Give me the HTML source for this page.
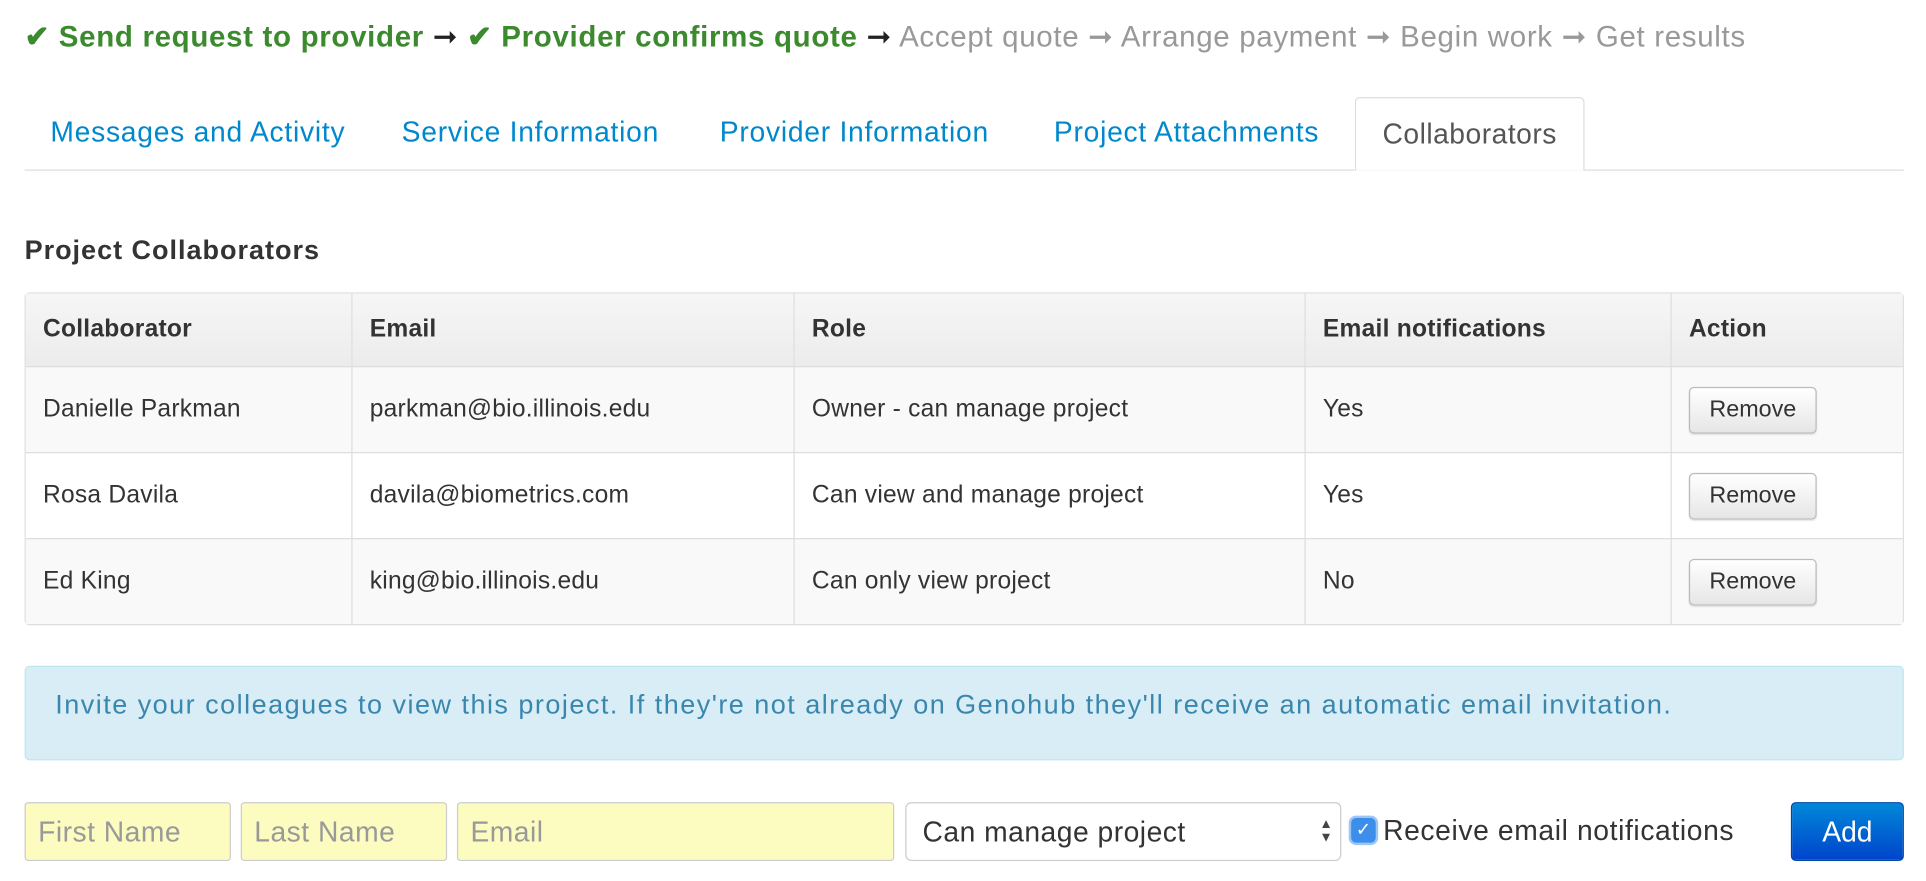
<!DOCTYPE html>
<html><head><meta charset="utf-8"><style>
html,body{margin:0;padding:0;background:#fff;overflow:hidden;width:1926px;height:880px}
#w{position:absolute;left:0;top:0;width:1568px;height:717px;transform:scale(1.22832);transform-origin:0 0;font-family:"Liberation Sans",sans-serif;color:#333}
.a{position:absolute;white-space:nowrap}
.steps{left:20px;top:16px;font-size:24px;letter-spacing:.55px}
.g{color:#3c8a2e;font-weight:bold}.gr{color:#999}.k{color:#222}
.tabline{left:20px;top:138px;width:1530px;height:1px;background:#ddd}
.tab{top:94px;font-size:23px;color:#0088cc;letter-spacing:.6px}
.act{left:1103px;top:79px;width:187px;height:60px;border:1px solid #ddd;border-bottom:1px solid #fff;border-radius:4px 4px 0 0;background:#fff;color:#555;font-size:23px;letter-spacing:.4px;text-align:center;line-height:58px;box-sizing:border-box}
h3{position:absolute;left:20px;top:191px;margin:0;font-size:22px;letter-spacing:.8px;font-weight:bold}
table{position:absolute;left:20px;top:238px;width:1530px;border-collapse:separate;border-spacing:0;border:1px solid #ddd;border-radius:4px;font-size:20px;letter-spacing:.2px}
td,th{border-left:1px solid #ddd;border-top:1px solid #ddd;text-align:left;padding:0 14px;background:#f9f9f9}
tr td:first-child,tr th:first-child{border-left:0}
th{height:59px;background:linear-gradient(#f6f6f6,#ececec);border-top:0;font-weight:bold}
td{height:69px}
tr.w td{background:#fff}
.btn{display:inline-block;width:104px;height:38px;line-height:36px;box-sizing:border-box;text-align:center;border:1px solid #bbb;border-radius:4px;background:linear-gradient(#fff,#e6e6e6);font-size:19px;letter-spacing:0;box-shadow:0 1px 1px rgba(0,0,0,.1)}
.alert{left:20px;top:542px;width:1530px;height:77px;box-sizing:border-box;background:#d9edf7;border:1px solid #bce8f1;border-radius:4px;color:#3a87ad;font-size:22px;letter-spacing:1.2px;padding:0 0 0 24px;line-height:62px}
.in{top:653px;height:48px;box-sizing:border-box;border:1px solid #ccc;border-radius:3px;background:#fcfcc0;color:#999;font-size:23px;letter-spacing:.4px;line-height:46px;padding-left:10px}
</style></head><body><div id="w">
<div class="a steps"><span class="g">✔ Send request to provider</span> <span class="k">➞</span> <span class="g">✔ Provider confirms quote</span> <span class="k">➞</span> <span class="gr">Accept quote ➞ Arrange payment ➞ Begin work ➞ Get results</span></div>
<div class="a tabline"></div>
<div class="a tab" style="left:41px">Messages and Activity</div>
<div class="a tab" style="left:327px">Service Information</div>
<div class="a tab" style="left:586px">Provider Information</div>
<div class="a tab" style="left:858px">Project Attachments</div>
<div class="a act">Collaborators</div>
<h3>Project Collaborators</h3>
<table>
<tr><th style="width:237px">Collaborator</th><th style="width:331px">Email</th><th style="width:387px">Role</th><th style="width:269px">Email notifications</th><th>Action</th></tr>
<tr><td>Danielle Parkman</td><td>parkman@bio.illinois.edu</td><td>Owner - can manage project</td><td>Yes</td><td><span class="btn">Remove</span></td></tr>
<tr class="w"><td>Rosa Davila</td><td>davila@biometrics.com</td><td>Can view and manage project</td><td>Yes</td><td><span class="btn">Remove</span></td></tr>
<tr><td>Ed King</td><td>king@bio.illinois.edu</td><td>Can only view project</td><td>No</td><td><span class="btn">Remove</span></td></tr>
</table>
<div class="a alert">Invite your colleagues to view this project. If they're not already on Genohub they'll receive an automatic email invitation.</div>
<div class="a in" style="left:20px;width:168px">First Name</div>
<div class="a in" style="left:196px;width:168px">Last Name</div>
<div class="a in" style="left:372px;width:356px">Email</div>
<div class="a in" style="left:737px;width:355px;background:#fff;color:#333;border-radius:5px;padding-left:13px">Can manage project<span style="position:absolute;right:6px;top:0;font-size:11px;line-height:11px;padding-top:12px;color:#444;letter-spacing:0">▲<br>▼</span></div>
<div class="a" style="left:1100px;top:666px;width:20px;height:20px;border-radius:4px;background:#3d8eea;box-shadow:0 0 0 2px #9cc7f5;color:#fff;font-size:15px;text-align:center;line-height:20px">✓</div>
<div class="a" style="left:1126px;top:663px;font-size:23px;letter-spacing:.5px;color:#333">Receive email notifications</div>
<div class="a" style="left:1458px;top:653px;width:92px;height:48px;border-radius:4px;background:linear-gradient(#0088d8,#0044cc);border:1px solid #0045a8;box-sizing:border-box;color:#fff;font-size:23px;text-align:center;line-height:46px">Add</div>
</div></body></html>
